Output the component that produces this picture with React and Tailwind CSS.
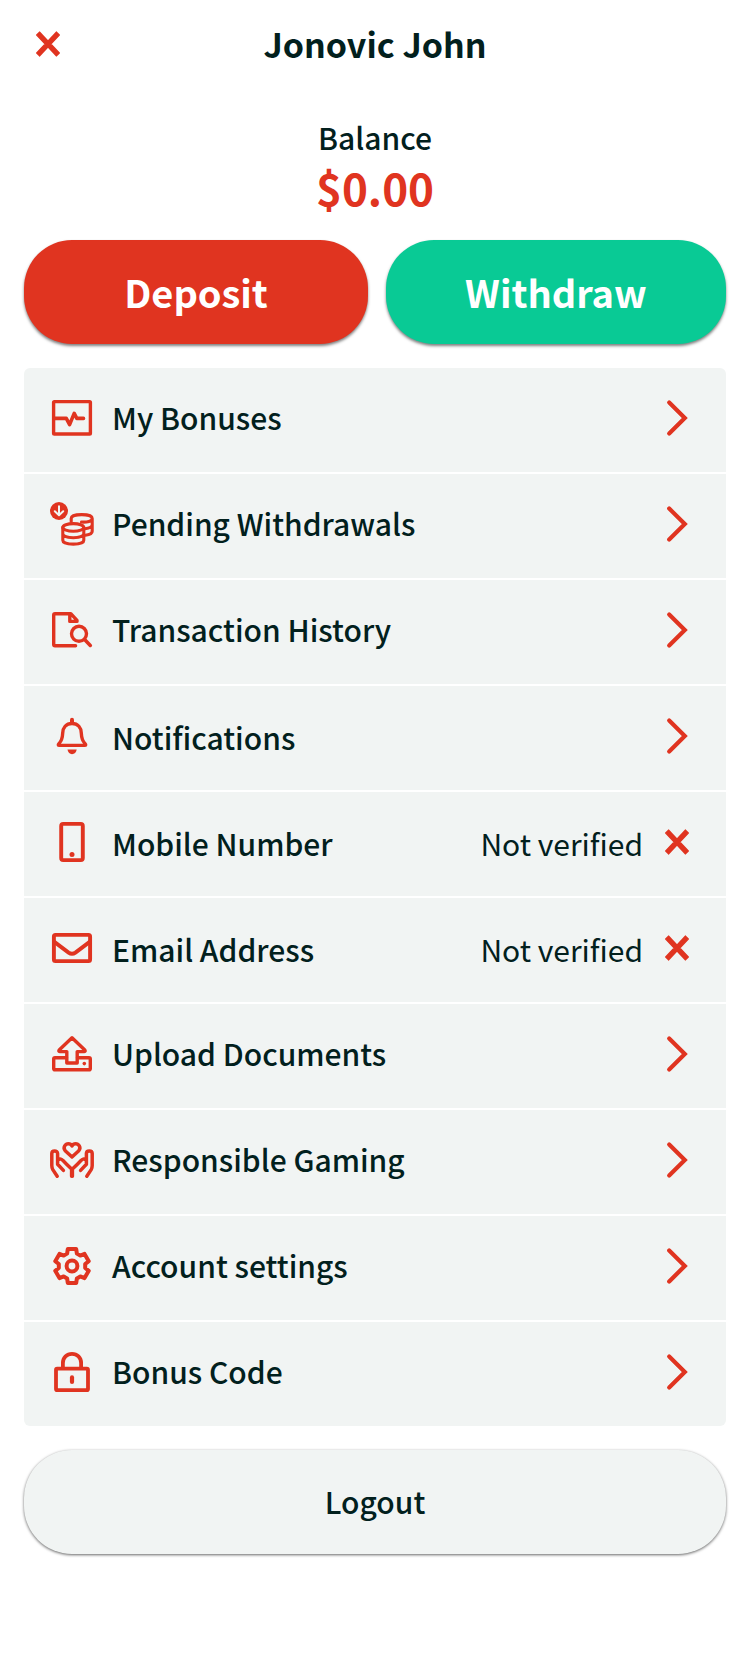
const GEAR = (() => {
  const tooth = [[-4.9, -12.4], [-4.2, -16.9], [4.2, -16.9], [4.9, -12.4]];
  const pts = [];
  for (let k = 0; k < 6; k++) {
    const a = (k * Math.PI) / 3;
    for (const [x, y] of tooth) {
      pts.push(
        (24 + x * Math.cos(a) - y * Math.sin(a)).toFixed(2) + " " +
        (24 + x * Math.sin(a) + y * Math.cos(a)).toFixed(2)
      );
    }
  }
  return "M" + pts.join("L") + "Z";
})();

function Icon({ children, w = 3.4 }) {
  return (
    <svg className="size-12 shrink-0" viewBox="0 0 48 48" fill="none" stroke="#e03420" strokeWidth={w} strokeLinecap="round" strokeLinejoin="round">
      {children}
    </svg>
  );
}

const icons = {
  bonuses: (
    <Icon>
      <rect x="5.6" y="7.6" width="36.8" height="32.4" rx="0.8" />
      <path d="M6 24.4H18.3L21.6 30.6L26.2 19.4L28.8 24.4H35.5" strokeWidth="3.6" />
    </Icon>
  ),
  withdrawals: (
    <Icon w={3.1}>
      <circle cx="11" cy="11" r="9" fill="#e03420" stroke="none" />
      <path d="M11 6.2V15M6.8 11.2L11 15.2L15.2 11.2" stroke="#f1f4f3" strokeWidth="2" />
      <ellipse cx="25.3" cy="27.4" rx="10.5" ry="3.8" />
      <path d="M14.8 27.4V40.2C14.8 45.4 35.8 45.4 35.8 40.2V27.4M14.8 33.8C14.8 39 35.8 39 35.8 33.8" />
      <path d="M23.2 21.5V18.4C23.2 13.4 44.2 13.4 44.2 18.4C44.2 21.2 39 22.4 33.5 22M44.2 18.4V31.2C44.2 33.4 41 34.8 37.4 35.2M44.2 24.8C44.2 27 41 28.2 37 28.7" />
    </Icon>
  ),
  history: (
    <Icon>
      <path d="M27.6 39.8H7Q5.7 39.8 5.7 38.5V9Q5.7 7.7 7 7.7H22.8L29 14.4V15.4H21.8V8.4" />
      <circle cx="31" cy="27.8" r="7.5" />
      <path d="M36.6 33.6L42.3 39.4" strokeWidth="3.6" />
    </Icon>
  ),
  bell: (
    <Icon>
      <path d="M24 7.8V10.5" strokeWidth="4" />
      <path d="M24 11.5C17.8 11.5 14.9 16 14.7 21C14.5 26.5 13.5 29 11 31.6Q9.6 33.4 11 33.4H37Q38.4 33.4 37 31.6C34.5 29 33.5 26.5 33.3 21C33.1 16 30.2 11.5 24 11.5Z" />
      <path d="M19.5 37.6H28.7C28.2 40.6 26.4 42.2 24 42.2C21.8 42.2 20 40.6 19.5 37.6Z" fill="#e03420" stroke="none" />
    </Icon>
  ),
  phone: (
    <Icon w={3.9}>
      <rect x="13.2" y="5.9" width="21.6" height="36.2" rx="2" />
      <circle cx="24" cy="36.4" r="2.5" fill="#e03420" stroke="none" />
    </Icon>
  ),
  mail: (
    <Icon w={3.9}>
      <rect x="5.9" y="10.9" width="36.2" height="26.2" rx="1.6" />
      <path d="M6 17.6L20.6 28.6Q24 31 27.4 28.6L42 17.6" />
    </Icon>
  ),
  upload: (
    <Icon>
      <path d="M24 7.7L36.8 20Q37.8 21.5 36.2 21.6H29.2V33H18.8V21.6H11.8Q10.2 21.5 11.2 20Z" />
      <path d="M18.5 27.7H7Q5.7 27.7 5.7 29V38.4Q5.7 39.8 7 39.8H41Q42.3 39.8 42.3 38.4V29Q42.3 27.7 41 27.7H29.5" />
      <circle cx="36.3" cy="33.6" r="1.8" fill="#e03420" stroke="none" />
    </Icon>
  ),
  hands: (
    <Icon w={3.5}>
      <path d="M24 21L17.2 14.7C14.4 11.2 17.6 7.7 20.4 7.7C22 7.7 23.4 8.8 24 9.9C24.6 8.8 26 7.7 27.6 7.7C30.4 7.7 33.6 11.2 30.8 14.7Z" />
      <path d="M9.2 40.2L4.8 33.6Q3.8 31.8 3.8 29.6V17.6C3.8 14 9.6 14 9.6 17.6V28.2L15.4 34.4M10 24C12 22.2 13.8 23.2 15 24.6L18.6 28.2L23.6 33V40.2M38.8 40.2L43.2 33.6Q44.2 31.8 44.2 29.6V17.6C44.2 14 38.4 14 38.4 17.6V28.2L32.6 34.4M38 24C36 22.2 34.2 23.2 33 24.6L29.4 28.2L24.4 33V40.2" />
    </Icon>
  ),
  gear: (
    <Icon w={4}>
      <path d={GEAR} />
      <circle cx="24" cy="24" r="5.4" />
    </Icon>
  ),
  lock: (
    <Icon w={3.8}>
      <rect x="8" y="20.6" width="32" height="21.6" rx="1.2" />
      <path d="M14.9 20V15C14.9 9.6 18.8 5.9 24 5.9C29.2 5.9 33.1 9.6 33.1 15V20" />
      <path d="M24 29.4V34" strokeWidth="4.2" />
    </Icon>
  ),
};

function Chevron() {
  return (
    <svg className="h-12 w-9 shrink-0" viewBox="0 0 36 48" fill="none" stroke="#e03420" strokeWidth="4.2">
      <path d="M10.2 8.6L25.8 24L10.2 39.4" strokeLinecap="round" />
    </svg>
  );
}

function Cross() {
  return (
    <svg className="h-12 w-9 shrink-0" viewBox="0 0 36 48" fill="#e03420" stroke="#e03420" strokeWidth="1.6" strokeLinejoin="round">
      <path d="M9.6 12.2L18 21.3L26.4 12.2L29.2 15L20.7 24L29.2 33L26.4 35.8L18 26.7L9.6 35.8L6.8 33L15.3 24L6.8 15Z" />
    </svg>
  );
}

const rows = [
  ["bonuses", "My Bonuses"],
  ["withdrawals", "Pending Withdrawals"],
  ["history", "Transaction History"],
  ["bell", "Notifications", null, true],
  ["phone", "Mobile Number", "Not verified", true],
  ["mail", "Email Address", "Not verified", true],
  ["upload", "Upload Documents"],
  ["hands", "Responsible Gaming"],
  ["gear", "Account settings"],
  ["lock", "Bonus Code"],
];

export default function App() {
  return (
    <main className="flex h-[1667px] w-[750px] flex-col bg-white px-6 font-['Noto_Sans_CJK_SC',sans-serif] text-[#02201d]">
      <header className="grid h-[88px] grid-cols-[48px_1fr_48px] items-center">
        <button className="flex items-center justify-center" aria-label="Close"><Cross /></button>
        <h1 className="text-center text-[34px] leading-[86px] font-bold">Jonovic John</h1>
      </header>
      <section className="flex h-[152px] flex-col items-center pt-[29px]">
        <p className="text-[30px] leading-[40px] font-medium">Balance</p>
        <p className="text-[44px] leading-[60px] font-bold text-[#e03420]">$0.00</p>
      </section>
      <div className="flex h-[104px] gap-[18px]">
        <button className="w-[344px] rounded-[48px] bg-[#e03420] pb-[1px] text-[38px] font-bold text-white shadow-[0_2px_3px_rgba(0,0,0,0.5)]">Deposit</button>
        <button className="w-[340px] rounded-[48px] bg-[#09ca95] pb-[1px] text-[38px] font-bold text-white shadow-[0_2px_3px_rgba(0,0,0,0.5)]">Withdraw</button>
      </div>
      <ul className="mt-6 flex flex-col gap-[2px] overflow-hidden rounded-md">
        {rows.map(([icon, label, status, low]) => (
          <li key={label} className="flex h-[104px] items-center bg-[#f1f4f3] pr-[31px] pb-1 pl-6">
            {icons[icon]}
            <span className={low ? "ml-4 pt-[2px] text-[30px] leading-none font-medium" : "ml-4 pb-[2px] text-[30px] leading-none font-medium"}>{label}</span>
            <span className="flex-1" />
            {status && <span className="mr-4 pt-[2px] text-[30px] leading-none">{status}</span>}
            {status ? <Cross /> : <Chevron />}
          </li>
        ))}
      </ul>
      <button className="mt-6 h-[104px] rounded-[48px] bg-[#f1f4f3] pb-[2px] text-[30px] font-medium shadow-[0_1px_3px_rgba(0,0,0,0.6)]">Logout</button>
    </main>
  );
}
